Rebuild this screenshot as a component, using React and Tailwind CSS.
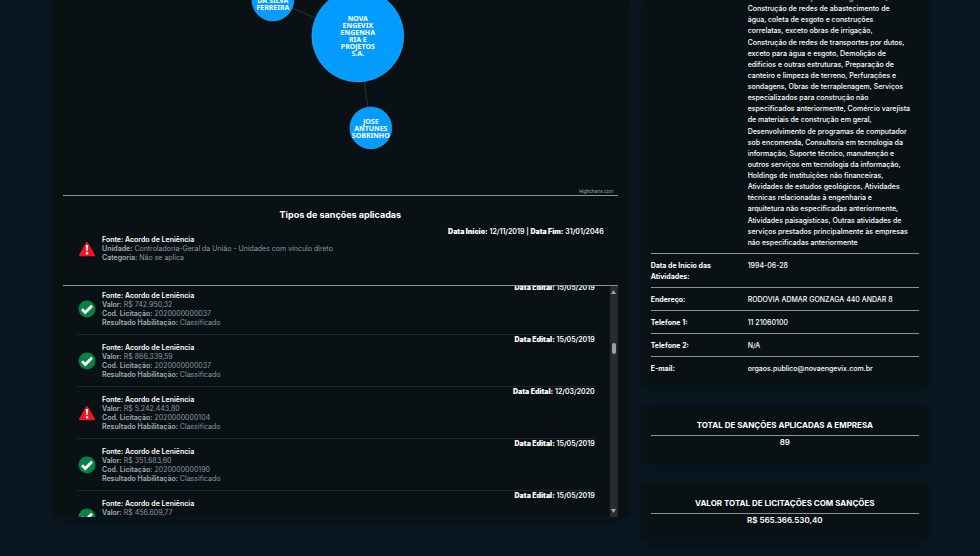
import { useLayoutEffect, useRef } from 'react';

const activities = [
    'Obras de urbanização de energia elétrica,',
    'Construção de redes de abastecimento de',
    'água, coleta de esgoto e construções',
    'correlatas, exceto obras de irrigação,',
    'Construção de redes de transportes por dutos,',
    'exceto para água e esgoto, Demolição de',
    'edifícios e outras estruturas, Preparação de',
    'canteiro e limpeza de terreno, Perfurações e',
    'sondagens, Obras de terraplenagem, Serviços',
    'especializados para construção não',
    'especificados anteriormente, Comércio varejista',
    'de materiais de construção em geral,',
    'Desenvolvimento de programas de computador',
    'sob encomenda, Consultoria em tecnologia da',
    'informação, Suporte técnico, manutenção e',
    'outros serviços em tecnologia da informação,',
    'Holdings de instituições não financeiras,',
    'Atividades de estudos geológicos, Atividades',
    'técnicas relacionadas à engenharia e',
    'arquitetura não especificadas anteriormente,',
    'Atividades paisagísticas, Outras atividades de',
    'serviços prestados principalmente às empresas',
    'não especificadas anteriormente',
];

const details = [
    { label: 'Data de Início das Atividades:', value: '1994-06-28' },
    { label: 'Endereço:', value: 'RODOVIA ADMAR GONZAGA 440 ANDAR 8' },
    { label: 'Telefone 1:', value: '11 21060100' },
    { label: 'Telefone 2:', value: 'N/A' },
    { label: 'E-mail:', value: 'orgaos.publico@novaengevix.com.br' },
];

const bids = [
    { ok: true, value: 'R$ 742.950,32', code: '2020000000037', date: '15/05/2019' },
    { ok: true, value: 'R$ 866.339,59', code: '2020000000037', date: '15/05/2019' },
    { ok: false, value: 'R$ 5.242.443,80', code: '2020000000104', date: '12/03/2020' },
    { ok: true, value: 'R$ 351.683,60', code: '2020000000190', date: '15/05/2019' },
    { ok: true, value: 'R$ 456.609,77', code: '2020000000190', date: '15/05/2019' },
];

const nodes = [
    { x: 210, y: 0, r: 21, top: 3, lines: ['DA SILVA', 'FERREIRA'] },
    { x: 295, y: 36, r: 46, top: 21, lines: ['NOVA', 'ENGEVIX', 'ENGENHA', 'RIA E', 'PROJETOS', 'S.A.'] },
    { x: 308, y: 128, r: 21, top: 124, lines: ['JOSE', 'ANTUNES', 'SOBRINHO'] },
];

function StatusIcon({ ok }) {
    if (ok) {
        return (
            <svg className="h-[18px] w-[18px] shrink-0" viewBox="0 0 18 18" role="img" aria-label="Habilitado">
                <circle cx="9" cy="9" r="8.5" fill="#088242" />
                <path d="M4 9.3 7.3 12.5 14 5.8" fill="none" stroke="#fff" strokeWidth="2.8" />
            </svg>
        );
    }
    return (
        <svg className="h-[18px] w-[18px] shrink-0" viewBox="0 0 18 18" role="img" aria-label="Alerta">
            <path d="M9 3 16 15.3H2Z" fill="#f3151f" stroke="#f3151f" strokeWidth="2" strokeLinejoin="round" />
            <path d="M7.8 5h2.4l-.5 6H8.3Z" fill="#fff" />
            <circle cx="9" cy="13.3" r="1.2" fill="#fff" />
        </svg>
    );
}

function Field({ label, children }) {
    return (
        <p className="text-[#8b96a3]">
            <span className="font-semibold text-[#a3adb8]">{label}</span> {children}
        </p>
    );
}

function PartnersGraph() {
    return (
        <div className="border-b border-[#8f9294]">
            <svg className="h-[195px] w-full" viewBox="0 0 555 195" preserveAspectRatio="xMidYMin meet">
                <path d="M210 0 295 36 308 128" fill="none" stroke="#2c3335" />
                {nodes.map((node) => (
                    <g key={node.x}>
                        <circle cx={node.x} cy={node.y} r={node.r} fill="#049dff" stroke="#3db2fb" strokeWidth="0.5" />
                        {node.lines.map((line, i) => (
                            <text key={line} x={node.x} y={node.top + i * 7} textAnchor="middle" className="fill-white font-['Noto_Sans',sans-serif] text-[7px] font-bold">
                                {line}
                            </text>
                        ))}
                    </g>
                ))}
                <text x="551" y="193" textAnchor="end" className="fill-[#a0a4a6] font-['Liberation_Sans',sans-serif] text-[5px]">Highcharts.com</text>
            </svg>
        </div>
    );
}

function BidList() {
    const listRef = useRef(null);

    useLayoutEffect(() => {
        listRef.current.scrollTop = 3;
    }, []);

    return (
        <div className="flex h-[232px] border-t border-[#8f9294]">
            <ul ref={listRef} className="flex-1 overflow-y-auto px-[15px] [scrollbar-width:none]">
                {bids.map((bid, i) => (
                    <li key={i} className="flex items-start border-b border-[#1d2931]">
                        <div className="flex flex-1 items-center gap-[6px] pt-2 pb-[7px]">
                            <StatusIcon ok={bid.ok} />
                            <div>
                                <p className="font-semibold">Fonte: Acordo de Leniência</p>
                                <Field label="Valor:">{bid.value}</Field>
                                <Field label="Cod. Licitação:">{bid.code}</Field>
                                <Field label="Resultado Habilitação:">Classificado</Field>
                            </div>
                        </div>
                        <p className="font-semibold"><b>Data Edital:</b> {bid.date}</p>
                    </li>
                ))}
            </ul>
            <div className="flex w-2 flex-col items-center bg-[#2b2b2b] py-1" aria-hidden="true">
                <svg className="h-1 w-[5px]" viewBox="0 0 5 4"><path d="M0 4 2.5 0 5 4Z" fill="#a3a3a3" /></svg>
                <div className="flex-1 pt-[49px]">
                    <div className="h-[11px] w-1 rounded-full bg-[#9f9f9f]" />
                </div>
                <svg className="h-1 w-[5px]" viewBox="0 0 5 4"><path d="M0 0 2.5 4 5 0Z" fill="#a3a3a3" /></svg>
            </div>
        </div>
    );
}

function TotalCard({ title, value }) {
    return (
        <section className="bg-[#0a1114] px-[10px] pt-[14px] pb-[16px] text-center text-[8px] leading-[12px] shadow-lg">
            <h2 className="border-b border-[#8f9294] pb-1 font-bold">{title}</h2>
            <p className="font-semibold">{value}</p>
        </section>
    );
}

export default function App() {
    return (
        <div className="min-h-screen bg-[#0a1720] font-['Inter',sans-serif] text-white">
            <main className="grid grid-cols-[minmax(0,2fr)_minmax(0,1fr)] items-start gap-3 pr-[51px] pl-[52px]">
                <section className="bg-[#0a1114] px-[11px] text-[7px] leading-[9px] shadow-lg">
                    <PartnersGraph />
                    <h2 className="pt-3 text-center text-[9px] leading-[14px] font-bold">Tipos de sanções aplicadas</h2>
                    <div className="flex items-start pt-[5px] pr-[14px] pb-[23px] pl-[15px]">
                        <div className="flex flex-1 items-center gap-[6px] pt-2">
                            <StatusIcon ok={false} />
                            <div>
                                <p className="font-semibold">Fonte: Acordo de Leniência</p>
                                <Field label="Unidade:">Controladoria-Geral da União - Unidades com vínculo direto</Field>
                                <Field label="Categoria:">Não se aplica</Field>
                            </div>
                        </div>
                        <p className="font-semibold"><b>Data Início:</b> 12/11/2019 | <b>Data Fim:</b> 31/01/2046</p>
                    </div>
                    <BidList />
                </section>

                <aside className="flex flex-col gap-[19px]">
                    <section className="rounded-b bg-[#0a1114] px-[10px] pb-[7px] shadow-lg">
                        <dl className="text-[7px] leading-[11px]">
                            <div className="flex h-[253px] items-end overflow-hidden pb-[5px]">
                                <dt className="w-[97px] shrink-0" />
                                <dd className="flex h-[256px] flex-col justify-between font-medium whitespace-nowrap">
                                    {activities.map((line) => <span key={line}>{line}</span>)}
                                </dd>
                            </div>
                            {details.map(({ label, value }) => (
                                <div key={label} className="flex border-t border-[#8f9294] pt-[6px] pb-[5px]">
                                    <dt className="w-[97px] shrink-0 pr-5 font-bold">{label}</dt>
                                    <dd className="font-medium whitespace-nowrap">{value}</dd>
                                </div>
                            ))}
                        </dl>
                    </section>
                    <TotalCard title="TOTAL DE SANÇÕES APLICADAS A EMPRESA" value="89" />
                    <TotalCard title="VALOR TOTAL DE LICITAÇÕES COM SANÇÕES" value="R$ 565.366.530,40" />
                </aside>
            </main>
        </div>
    );
}
